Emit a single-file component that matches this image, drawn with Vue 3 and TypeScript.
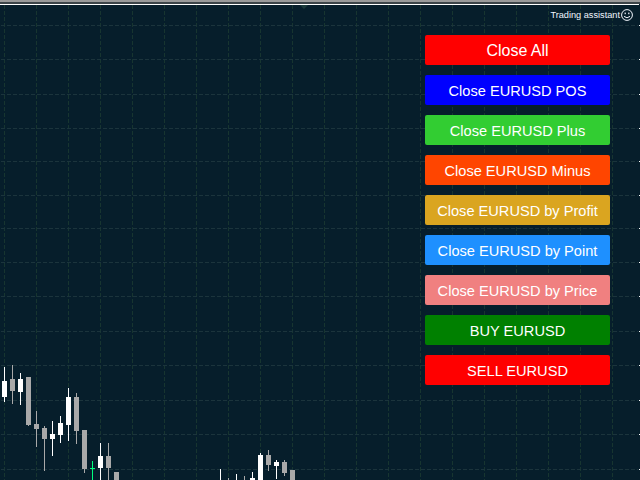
<script setup lang="ts">
interface Candle { x: number; hi: number; lo: number; top: number; bottom: number; up: boolean }

const hLines = [25, 59, 94, 128, 161, 195, 228, 262, 296, 331, 365, 400, 434, 469]
const vLines = Array.from({ length: 20 }, (_, i) => 4 + i * 32)

const raw: [number, number, number, number, number, boolean][] = [
  [4, 367, 402, 381, 397, true],
  [12, 365, 404, 379, 391, false],
  [20, 373, 405, 379, 392, true],
  [28, 377, 426, 377, 425, false],
  [36, 411, 447, 424, 429, false],
  [44, 426, 471, 428, 439, false],
  [52, 421, 456, 434, 439, true],
  [60, 416, 443, 423, 435, true],
  [68, 388, 441, 397, 425, true],
  [76, 393, 444, 397, 431, false],
  [84, 430, 473, 430, 469, false],
  [100, 443, 480, 456, 468, true],
  [108, 443, 480, 456, 468, false],
  [116, 472, 480, 472, 480, false],
  [220, 469, 480, 480, 480, true],
  [228, 478, 480, 480, 480, false],
  [236, 474, 480, 480, 480, true],
  [244, 476, 480, 480, 480, false],
  [252, 472, 480, 478, 480, true],
  [260, 453, 480, 455, 480, true],
  [268, 450, 471, 455, 465, false],
  [276, 460, 479, 462, 466, true],
  [284, 460, 476, 462, 473, false],
  [292, 470, 480, 470, 480, false],
]
const candles: Candle[] = raw.map(([x, hi, lo, top, bottom, up]) => ({ x, hi, lo, top, bottom, up }))

const buttons = [
  { label: 'Close All', tone: 'red', big: true },
  { label: 'Close EURUSD POS', tone: 'blue' },
  { label: 'Close EURUSD Plus', tone: 'lime' },
  { label: 'Close EURUSD Minus', tone: 'orange' },
  { label: 'Close EURUSD by Profit', tone: 'gold' },
  { label: 'Close EURUSD by Point', tone: 'dodger' },
  { label: 'Close EURUSD by Price', tone: 'coral' },
  { label: 'BUY EURUSD', tone: 'green' },
  { label: 'SELL EURUSD', tone: 'red' },
]
</script>

<template>
  <div class="stage">
    <svg class="chart" width="640" height="480" viewBox="0 0 640 480">
      <rect x="0" y="0" width="640" height="2" fill="#9a9a9a" />
      <rect x="0" y="2" width="640" height="2" fill="#3c4448" />
      <rect x="0" y="4" width="639" height="1" fill="#ffffff" />
      <polygon points="300,5 308,5 304,9" fill="#1a3a3a" />
      <line v-for="x in vLines" :key="'v' + x" class="grid-v" :x1="x + 0.5" y1="5" :x2="x + 0.5" y2="480" />
      <line v-for="y in hLines" :key="'h' + y" class="grid-h" x1="1" :y1="y + 0.5" x2="638" :y2="y + 0.5" />
      <rect v-for="y in hLines" :key="'t' + y" x="639" :y="y" width="1" height="1" fill="#ffffff" />
      <g v-for="c in candles" :key="c.x">
        <rect :x="c.x" :y="c.hi" width="1" :height="c.lo - c.hi" :fill="c.up ? '#ffffff' : '#a9a9a9'" />
        <rect :x="c.x - 2" :y="c.top" width="5" :height="c.bottom - c.top" :fill="c.up ? '#ffffff' : '#a9a9a9'" />
      </g>
      <rect x="92" y="461" width="1" height="19" fill="#00ff7f" />
      <rect x="90" y="468" width="5" height="1" fill="#00ff7f" />
    </svg>

    <div class="assistant">
      <span class="assistant-label">Trading assistant</span>
      <svg class="smiley" width="12" height="12" viewBox="0 0 12 12" fill="none">
        <circle cx="6" cy="6" r="5.4" stroke="#f4f8ff" stroke-width="1" />
        <rect x="3.6" y="3.6" width="1.2" height="1.6" fill="#f4f8ff" />
        <rect x="7.2" y="3.6" width="1.2" height="1.6" fill="#f4f8ff" />
        <path d="M3 7.4 Q6 10.2 9 7.4" stroke="#f4f8ff" stroke-width="1" />
      </svg>
    </div>

    <div class="panel">
      <button
        v-for="b in buttons"
        :key="b.label + b.tone"
        class="action"
        :class="[b.tone, { big: b.big }]"
        type="button"
      >{{ b.label }}</button>
    </div>
  </div>
</template>

<style scoped>
.stage {
  position: relative;
  width: 640px;
  height: 480px;
  overflow: hidden;
  background: #061e2b;
  font-family: "Liberation Sans", Arial, sans-serif;
}
.chart {
  position: absolute;
  inset: 0;
  display: block;
}
.grid-v {
  stroke: #173530;
  stroke-width: 1;
  stroke-dasharray: 4 2;
}
.grid-h {
  stroke: #1b343c;
  stroke-width: 1;
  stroke-dasharray: 4 2;
}
.assistant {
  position: absolute;
  top: 9px;
  right: 7px;
  display: flex;
  align-items: center;
  gap: 1px;
  height: 12px;
}
.assistant-label {
  font-size: 9.2px;
  line-height: 12px;
  color: #f0f6ff;
  white-space: nowrap;
}
.smiley {
  display: block;
}
.panel {
  position: absolute;
  top: 35px;
  left: 425px;
  width: 185px;
  display: flex;
  flex-direction: column;
  gap: 10px;
}
.action {
  height: 30px;
  padding: 2px 0 0;
  border: 0;
  border-radius: 2px;
  color: #ffffff;
  font-family: inherit;
  font-size: 14.6px;
  line-height: 28px;
  text-align: center;
  white-space: nowrap;
}
.action.big {
  padding-top: 1px;
  line-height: 29px;
  font-size: 16px;
}
.red { background: #ff0000; }
.blue { background: #0000ff; }
.lime { background: #32cd32; }
.orange { background: #ff4500; }
.gold { background: #daa520; }
.dodger { background: #1e90ff; }
.coral { background: #f08080; }
.green { background: #008000; }
</style>
